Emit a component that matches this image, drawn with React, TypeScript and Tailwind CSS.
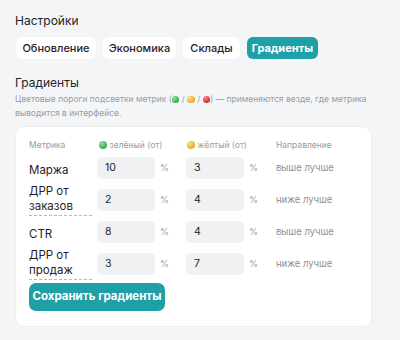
import React from "react";

const Dot = ({ c }: { c: "g" | "y" | "r" }) => {
  const cls =
    c === "g"
      ? "bg-[radial-gradient(circle_at_35%_30%,#8fe3a0,#2fae4f_70%)]"
      : c === "y"
      ? "bg-[radial-gradient(circle_at_35%_30%,#ffe08a,#e9a825_70%)]"
      : "bg-[radial-gradient(circle_at_35%_30%,#ff8a8a,#d9262f_70%)]";
  return <span className={`inline-block shrink-0 w-[7.5px] h-[7.5px] rounded-full align-[-1px] ${cls}`} />;
};

const rows = [
  { name: "Маржа", g: "10", y: "3", dir: "выше лучше", two: false },
  { name: "ДРР от заказов", g: "2", y: "4", dir: "ниже лучше", two: true },
  { name: "CTR", g: "8", y: "4", dir: "выше лучше", two: false },
  { name: "ДРР от продаж", g: "3", y: "7", dir: "ниже лучше", two: true },
];

export default function App() {
  return (
    <div className="w-[400px] h-[340px] bg-[#f4f5f7] px-[15px] pt-[14px] text-[#1f2328] font-['Inter','Noto_Sans',sans-serif] overflow-hidden">
      <div className="text-[12px] leading-[14px]">Настройки</div>
      <div className="flex gap-[7px] mt-[9px] ml-px">
        <button className="h-[22px] w-[80px] rounded-[6px] bg-white text-[11px] font-medium">Обновление</button>
        <button className="h-[22px] w-[73px] rounded-[6px] bg-white text-[11px] font-medium">Экономика</button>
        <button className="h-[22px] w-[57px] rounded-[6px] bg-white text-[11px] font-medium">Склады</button>
        <button className="h-[22px] w-[71px] rounded-[6px] bg-[#1fa0a7] text-white text-[11px] font-bold">Градиенты</button>
      </div>
      <div className="text-[12px] leading-[14px] mt-[17px]">Градиенты</div>
      <div className="text-[8.5px] leading-[14px] text-[#9a9ca0] mt-[2px] whitespace-nowrap">
        Цветовые пороги подсветки метрик (<Dot c="g" /> / <Dot c="y" /> / <Dot c="r" />) — применяются везде, где метрика
        <br />
        выводится в интерфейсе.
      </div>
      <div className="mt-[6px] bg-white rounded-[9px] border border-[#eceef1] pl-[13px] pr-[13px] pt-[11px] pb-[15px] w-[357px]">
        <div className="grid grid-cols-[68px_58px_31px_58px_32px_1fr] items-center h-[14px] text-[8.5px] text-[#9a9ca0] whitespace-nowrap">
          <div>Метрика</div>
          <div className="flex items-center gap-[3px] pl-[2px]"><Dot c="g" /> <span>зелёный (от)</span></div>
          <div />
          <div className="flex items-center gap-[3px] pl-[1px]"><Dot c="y" /> <span>жёлтый (от)</span></div>
          <div />
          <div>Направление</div>
        </div>
        {rows.map((r) => (
          <div key={r.name} className="grid grid-cols-[68px_58px_31px_58px_32px_1fr] items-center h-[32px]">
            <div>
              <span
                className={
                  r.two
                    ? "inline-block text-[11.5px] leading-[15px] pb-px border-b border-dashed border-[#b5b8bd] w-[63px]"
                    : "text-[11.5px] leading-[15px]"
                }
              >
                {r.name}
              </span>
            </div>
            <div className="h-[22px] rounded-[5px] bg-[#f0f1f3] flex items-center pl-[8px] text-[10.5px]">{r.g}</div>
            <div className="pl-[5px] text-[9px] text-[#9a9ca0]">%</div>
            <div className="h-[22px] rounded-[5px] bg-[#f0f1f3] flex items-center pl-[8px] text-[10.5px]">{r.y}</div>
            <div className="pl-[5px] text-[9px] text-[#9a9ca0]">%</div>
            <div className="text-[9.5px] text-[#8e9095]">{r.dir}</div>
          </div>
        ))}
        <button className="mt-[3px] h-[28px] w-[136px] rounded-[7px] bg-[#1fa0a7] text-white text-[11.5px] font-bold">
          Сохранить градиенты
        </button>
      </div>
    </div>
  );
}
